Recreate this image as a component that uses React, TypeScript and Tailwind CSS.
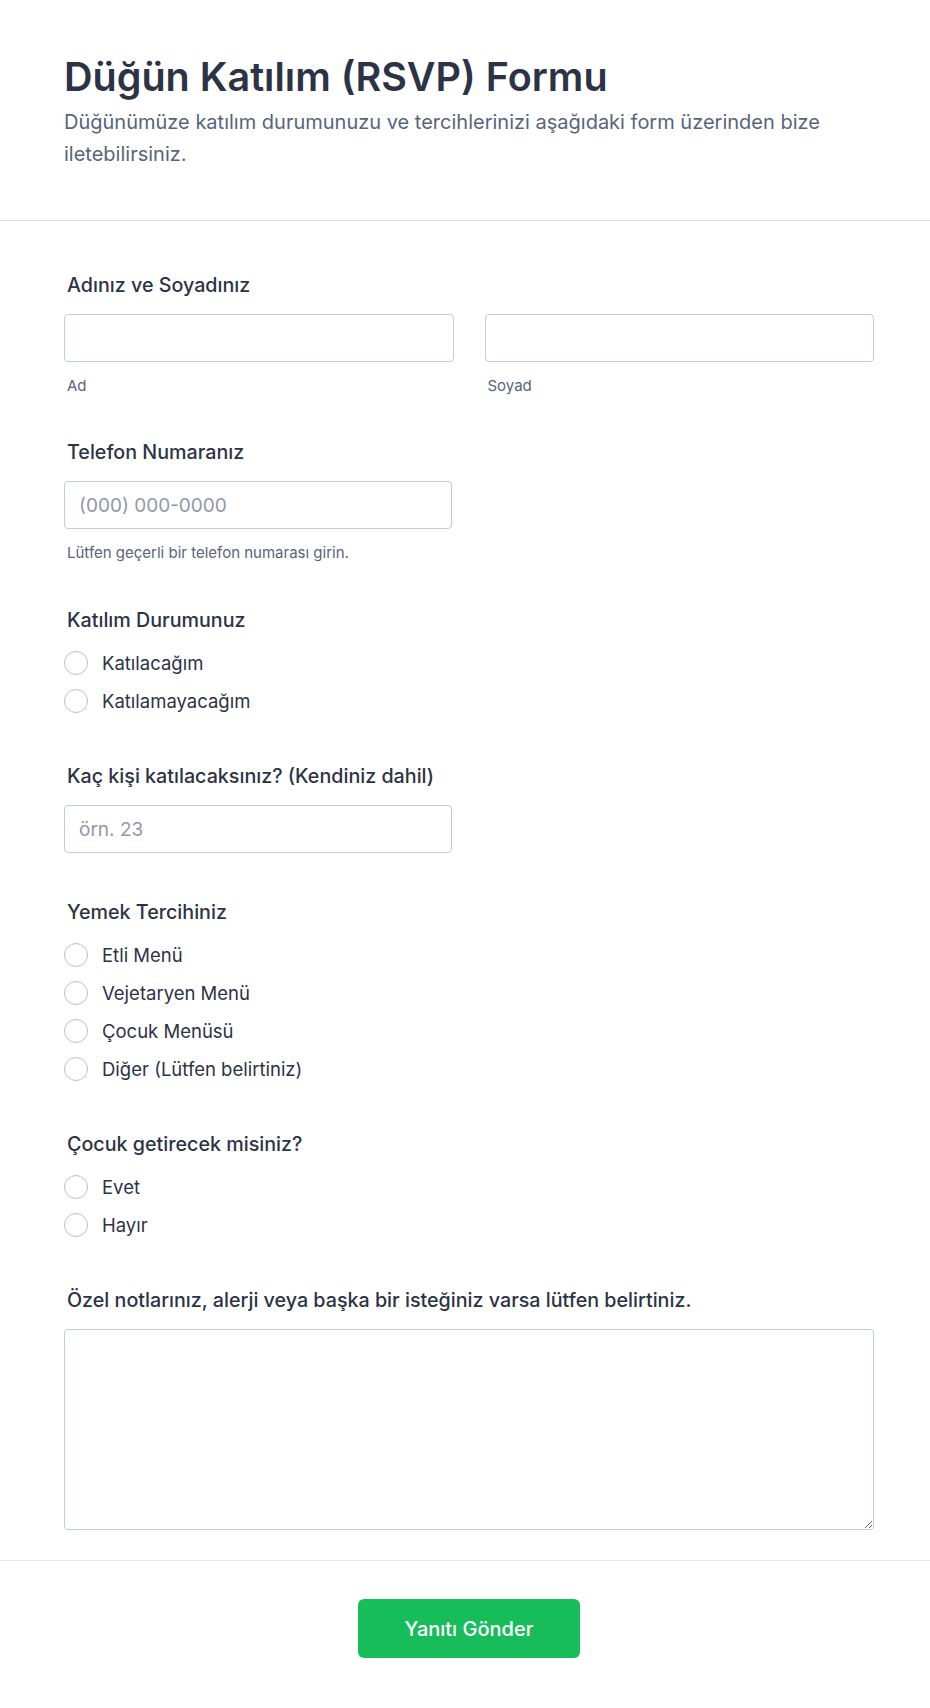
import { useState } from 'react';

const font = { fontFamily: 'Inter, "Noto Sans", sans-serif' };

function Label({ children }: { children: React.ReactNode }) {
  return <div className="ml-[3px] text-[19.7px] leading-7 font-medium text-[#2c3345]">{children}</div>;
}

function Hint({ children }: { children: React.ReactNode }) {
  return <div className="mt-[14px] ml-[3px] text-[15px] leading-5 text-[#57647e]">{children}</div>;
}

function TextInput({ placeholder, className = '' }: { placeholder?: string; className?: string }) {
  return (
    <input
      type="text"
      placeholder={placeholder}
      className={`mt-[15px] h-12 rounded-[4px] border border-[#c3cad8] bg-white px-[14px] text-[19px] text-[#2c3345] placeholder:text-[#8f98aa] outline-none ${className}`}
    />
  );
}

function RadioGroup({ name, options }: { name: string; options: string[] }) {
  const [value, setValue] = useState<string | null>(null);
  return (
    <div className="mt-[15px] flex flex-col gap-[10px] pb-1">
      {options.map((opt) => (
        <label key={opt} className="flex h-7 items-center gap-[14px] cursor-pointer" onClick={() => setValue(opt)}>
          <span
            className={`h-6 w-6 shrink-0 rounded-full border bg-white ${
              value === opt ? 'border-[6px] border-[#18bd5b]' : 'border-[#b8bfcc]'
            }`}
          />
          <input type="radio" name={name} className="hidden" readOnly checked={value === opt} />
          <span className="text-[18.5px] leading-7 text-[#2c3345]">{opt}</span>
        </label>
      ))}
    </div>
  );
}

export default function App() {
  return (
    <div className="min-h-screen bg-white" style={font}>
      {/* başlık */}
      <header className="border-b border-[#dcdee6] pl-16 pr-14 pt-[53px] pb-[50px]">
        <h1 className="text-[39.5px] leading-[48px] font-semibold text-[#2c3345]">Düğün Katılım (RSVP) Formu</h1>
        <p className="mt-[5px] text-[20px] leading-8 text-[#57647e]">
          Düğünümüze katılım durumunuzu ve tercihlerinizi aşağıdaki form üzerinden bize iletebilirsiniz.
        </p>
      </header>

      <main className="pl-16 pr-14 pt-[50px] pb-[30px]">
        <section>
          <Label>Adınız ve Soyadınız</Label>
          <div className="grid grid-cols-2 gap-[31px]">
            <div>
              <TextInput className="w-full" />
              <Hint>Ad</Hint>
            </div>
            <div>
              <TextInput className="w-full" />
              <Hint>Soyad</Hint>
            </div>
          </div>
        </section>

        <section className="mt-[42px]">
          <Label>Telefon Numaranız</Label>
          <TextInput placeholder="(000) 000-0000" className="w-[388px]" />
          <Hint>Lütfen geçerli bir telefon numarası girin.</Hint>
        </section>

        <section className="mt-[43px]">
          <Label>Katılım Durumunuz</Label>
          <RadioGroup name="katilim" options={['Katılacağım', 'Katılamayacağım']} />
        </section>

        <section className="mt-[43px]">
          <Label>Kaç kişi katılacaksınız? (Kendiniz dahil)</Label>
          <TextInput placeholder="örn. 23" className="w-[388px]" />
        </section>

        <section className="mt-[45px]">
          <Label>Yemek Tercihiniz</Label>
          <RadioGroup
            name="yemek"
            options={['Etli Menü', 'Vejetaryen Menü', 'Çocuk Menüsü', 'Diğer (Lütfen belirtiniz)']}
          />
        </section>

        <section className="mt-[43px]">
          <Label>Çocuk getirecek misiniz?</Label>
          <RadioGroup name="cocuk" options={['Evet', 'Hayır']} />
        </section>

        <section className="mt-[43px]">
          <Label>Özel notlarınız, alerji veya başka bir isteğiniz varsa lütfen belirtiniz.</Label>
          <textarea className="mt-[15px] block h-[201px] w-full rounded-[4px] border border-[#c3cad8] bg-white p-3 text-[18px] text-[#2c3345] outline-none" />
        </section>
      </main>

      <footer className="flex justify-center border-t border-[#e6e8ee] pl-16 pr-14 pt-[38px] pb-[50px]">
        <button className="h-[59px] w-[222px] rounded-[6px] bg-[#18bd5b] text-[20px] font-medium text-white">
          Yanıtı Gönder
        </button>
      </footer>
    </div>
  );
}
